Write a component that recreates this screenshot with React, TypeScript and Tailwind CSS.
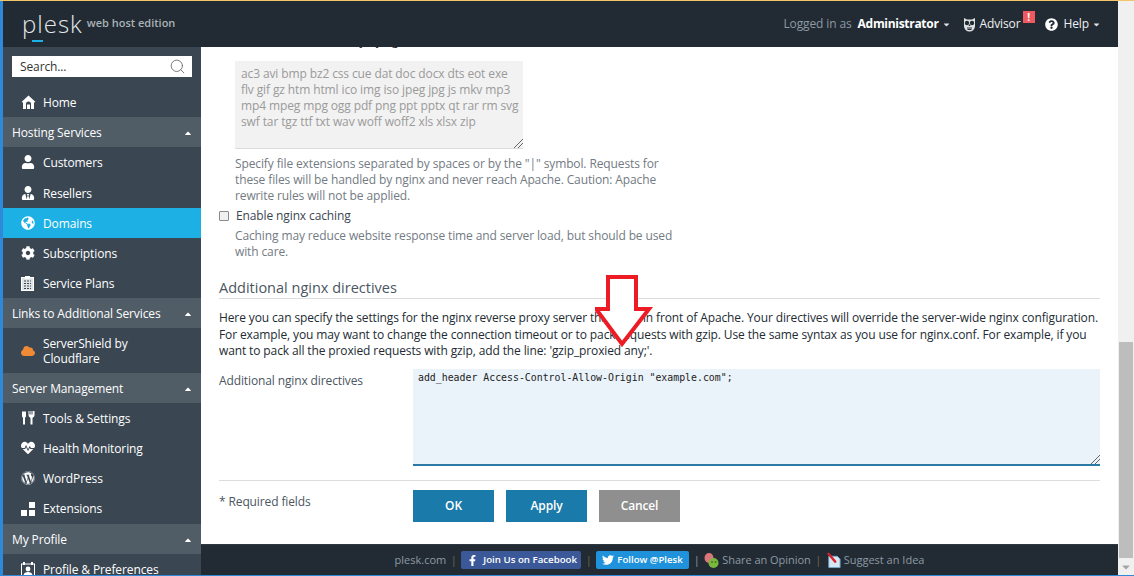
import React from "react";
import { Search } from "lucide-react";
import { FaUser, FaUserTie, FaGlobeAmericas, FaCog, FaHeartbeat, FaWordpress, FaFacebookF, FaTwitter, FaQuestionCircle, FaCloud, FaCaretDown, FaCaretUp } from "react-icons/fa";

const HomeIcon = () => (
  <svg width="15" height="15" viewBox="0 0 15 15" fill="#fff"><path d="M7.5 0.5 L14.5 7 L13 7.5 V14 H10 V9 a2.5 2.5 0 0 0-5 0 V14 H2 V7.5 L.5 7 Z"/><rect x="6" y="9.5" width="3" height="4.5"/></svg>
);
const PlansIcon = () => (
  <svg width="13" height="15" viewBox="0 0 13 15"><rect x=".5" y="1.5" width="12" height="13" fill="#dfe3e6" stroke="#fff"/><rect x="4" y="0" width="5" height="3" fill="#fff"/><path d="M3 5h7M3 7.5h7M3 10h7M3 12.5h7" stroke="#3a4652" strokeDasharray="2 1"/></svg>
);
const ExtIcon = () => (
  <svg width="14" height="14" viewBox="0 0 14 14" fill="#fff"><rect x="0" y="8" width="6" height="6"/><rect x="8" y="8" width="6" height="6"/><rect x="8" y="0" width="6" height="6"/></svg>
);
const ProfileIcon = () => (
  <svg width="14" height="14" viewBox="0 0 14 14" fill="none"><rect x=".5" y="2" width="13" height="12" stroke="#fff"/><circle cx="7" cy="7" r="2.4" fill="#fff"/><path d="M2.5 14c0-3 2-4 4.500-4s4.500 1 4.500 4z" fill="#fff"/><rect x="2" y="0" width="2" height="3" fill="#fff"/><rect x="10" y="0" width="2" height="3" fill="#fff"/></svg>
);
const ToolsIcon = () => (
  <svg width="14" height="14" viewBox="0 0 14 14" fill="#fff"><path d="M1 0.500 h4 V5 a2 2 0 0 1-1 1.700 L4 13.500 H2 L2 6.700 A2 2 0 0 1 1 5 Z"/><path d="M7.500 0 L8.500 0 V3.500 H9.500 V0 H10.500 V3.500 H11.500 V0 H12.500 L13.500 0 V4 C13.500 6 12 6.500 11.500 6.800 V13.500 H9.500 V6.800 C9 6.500 7.500 6 7.500 4 Z"/></svg>
);
const OwlIcon = () => (
  <svg width="13" height="15" viewBox="0 0 13 15"><path d="M1 1 L4 2.500 H9 L12 1 V9 a5.500 5.500 0 0 1-11 0 Z" fill="#dfe2e4"/><circle cx="4" cy="6" r="2.200" fill="#222b33"/><circle cx="9" cy="6" r="2.200" fill="#222b33"/><path d="M6.500 7 L7.500 9 H5.500 Z" fill="#222b33"/><path d="M4 11h5M4.500 12.500h4" stroke="#222b33"/></svg>
);
const ChatIcon = () => (
  <svg width="15" height="17" viewBox="0 0 15 17"><ellipse cx="5" cy="6" rx="4.500" ry="5" fill="#d9787c"/><circle cx="9.500" cy="11" r="5" fill="#7ab93d"/><circle cx="8" cy="10" r="1" fill="#3f7a1c"/><circle cx="11.500" cy="10" r="1" fill="#3f7a1c"/></svg>
);
const IdeaIcon = () => (
  <svg width="15" height="17" viewBox="0 0 16 17"><path d="M3 4 H12 L15 7 V16 H3 Z" fill="#d7e8f4" stroke="#7aa8c8"/><path d="M1 1 L3 0 L11 9 L11 11 L9 11 Z" fill="#d8232a"/></svg>
);
const Grip = () => (
  <svg className="absolute bottom-0 right-0" width="9" height="9" viewBox="0 0 9 9" stroke="#666"><path d="M0 9L9 0M4 9L9 4" /></svg>
);

const Item = ({ icon, children, active, className = "h-[30px]" }: { icon: React.ReactNode; children: React.ReactNode; active?: boolean; className?: string }) => (
  <div className={`flex shrink-0 items-center pl-[18px] text-[12px] leading-[15px] text-white ${active ? "bg-[#1cb0e4]" : ""} ${className}`}>
    <span className="flex w-[22px] shrink-0 justify-start">{icon}</span>
    <span>{children}</span>
  </div>
);
const Group = ({ children }: { children: React.ReactNode }) => (
  <div className="flex h-[30px] shrink-0 items-center justify-between bg-[#505c66] pl-[9px] pr-[8px] pt-[2px] text-[12px] text-white">
    <span>{children}</span>
    <FaCaretUp size={10} className="text-white" />
  </div>
);

export default function App() {
  return (
    <div className="flex h-[576px] w-[1134px] flex-col overflow-hidden bg-white font-['Open_Sans',sans-serif] text-[12px] tracking-[-0.12px] text-[#3a4652]">
      <div className="h-px shrink-0 bg-[#f3c56b]" />
      <div className="flex min-h-0 flex-1 border-b border-[#2e8ad8]">
        <div className="w-[3px] shrink-0 bg-[#2e8ad8]" />
        <div className="flex min-w-0 flex-1 flex-col">
          <div className="flex min-h-0 flex-1">
            <div className="flex min-w-0 flex-1 flex-col">
              <header className="z-10 flex h-[46px] shrink-0 items-center justify-between bg-[#222b33]">
                <div className="flex items-center pl-[19px]">
                  <span className="relative text-[24px] leading-[30px] font-light tracking-[1px] text-[#e6e9eb]">
                    plesk
                    <span className="absolute left-[10px] top-[31px] h-[2px] w-[11px] bg-[#1cb0e4]" />
                  </span>
                  <span className="mb-[2px] ml-[4px] text-[11px] font-semibold tracking-normal text-[#a9b2b8]">web host edition</span>
                </div>
                <div className="flex items-center pr-[17px] text-[12px]">
                  <span className="text-[#8d9aa5]">Logged in as</span>
                  <span className="ml-[6px] font-bold tracking-[-0.3px] text-white">Administrator</span>
                  <FaCaretDown size={9} className="ml-[3px] text-[#dfe2e4]" />
                  <span className="ml-[12px]"><OwlIcon /></span>
                  <span className="relative ml-[4px] mr-[16px] text-[#eef0f2]">
                    Advisor
                    <span className="absolute -right-[14px] -top-[4px] flex h-[12px] w-[12px] items-center justify-center bg-[#ee5a5f] text-[10px] font-bold leading-none text-white">!</span>
                  </span>
                  <FaQuestionCircle size={13} className="ml-[8px] text-white" />
                  <span className="ml-[6px] text-[#eef0f2]">Help</span>
                  <FaCaretDown size={9} className="ml-[3px] text-[#dfe2e4]" />
                </div>
              </header>
              <div className="flex min-h-0 flex-1">
                <aside className="flex w-[198px] shrink-0 flex-col overflow-hidden bg-[#3a4652]">
                  <div className="h-[40px] shrink-0 px-[9px] pt-[9px]">
                    <div className="flex h-[21px] w-[180px] items-center justify-between bg-white pl-[8px] pr-[6px] text-[#333]">
                      <span className="pt-[1px]">Search...</span>
                      <Search size={17} strokeWidth={1.200} className="text-[#666]" />
                    </div>
                  </div>
                  <Item icon={<HomeIcon />}>Home</Item>
                  <Group>Hosting Services</Group>
                  <Item icon={<FaUser size={14} />}>Customers</Item>
                  <Item icon={<FaUserTie size={14} />} className="h-[31px] pt-[1px]">Resellers</Item>
                  <Item icon={<FaGlobeAmericas size={14} />} active>Domains</Item>
                  <Item icon={<FaCog size={14} />}>Subscriptions</Item>
                  <Item icon={<PlansIcon />}>Service Plans</Item>
                  <Group>Links to Additional Services</Group>
                  <Item icon={<FaCloud size={14} className="text-[#f08a34]" />} className="h-[45px]">ServerShield by<br />Cloudflare</Item>
                  <Group>Server Management</Group>
                  <Item icon={<ToolsIcon />}>Tools &amp; Settings</Item>
                  <Item icon={<FaHeartbeat size={14} />}>Health Monitoring</Item>
                  <Item icon={<FaWordpress size={14} />}>WordPress</Item>
                  <Item icon={<ExtIcon />} className="h-[31px]">Extensions</Item>
                  <Group>My Profile</Group>
                  <Item icon={<ProfileIcon />}>Profile &amp; Preferences</Item>
                </aside>
                <main className="relative flex min-w-0 flex-1 flex-col">
                  <div className="min-h-0 flex-1 overflow-hidden pl-[18px] pr-[18px]">
                    <div className="-mt-[15px] pl-[16px] leading-[18px]">
                      <div className="h-[29px] text-[#222]">Serve static files directly by nginx</div>
                      <div className="relative h-[88px] w-[288px] border-b border-[#ddd] bg-[#f2f2f2] pl-[6px] pt-[5px] leading-[16px] text-[#9a9a9a]">
                        <div className="whitespace-nowrap">ac3 avi bmp bz2 css cue dat doc docx dts eot exe</div>
                        <div className="whitespace-nowrap">flv gif gz htm html ico img iso jpeg jpg js mkv mp3</div>
                        <div className="whitespace-nowrap">mp4 mpeg mpg ogg pdf png ppt pptx qt rar rm svg</div>
                        <div className="whitespace-nowrap">swf tar tgz ttf txt wav woff woff2 xls xlsx zip</div>
                        <Grip />
                      </div>
                      <p className="mt-[7px] w-[440px] leading-[16px] text-[#737b83]">
                        Specify file extensions separated by spaces or by the "|" symbol. Requests for these files will be handled by nginx and never reach Apache. Caution: Apache rewrite rules will not be applied.
                      </p>
                    </div>
                    <label className="mt-[3px] flex h-[18px] items-center text-[#3a4652]">
                      <span className="mr-[7px] h-[10px] w-[10px] rounded-[1px] border border-[#8a8a8a] bg-[#f0f0f0]" />
                      Enable nginx caching
                    </label>
                    <p className="mt-[3px] w-[465px] pl-[16px] leading-[16px] text-[#737b83]">
                      Caching may reduce website response time and server load, but should be used with care.
                    </p>
                    <h3 className="mt-[17px] h-[22px] border-b border-[#ddd] text-[14.500px] leading-[22px] tracking-normal text-[#4b565f]">Additional nginx directives</h3>
                    <p className="mt-[11px] h-[49px] leading-[16.500px] text-[#222b33]">
                      Here you can specify the settings for the nginx reverse proxy server that runs in front of Apache. Your directives will override the server-wide nginx configuration. For example, you may want to change the connection timeout or to pack requests with gzip. Use the same syntax as you use for nginx.conf. For example, if you want to pack all the proxied requests with gzip, add the line: 'gzip_proxied any;'.
                    </p>
                    <div className="mt-[10px] flex">
                      <div className="w-[194px] pt-[3px] text-[#4b565f]">Additional nginx directives</div>
                      <div className="relative h-[97px] flex-1 border-b-2 border-[#2b7aa3] bg-[#ebf3fa] pl-[5px] pt-[2px] font-['DejaVu_Sans_Mono',monospace] text-[9.870px] leading-[14px] tracking-normal text-[#222]">
                        add_header Access-Control-Allow-Origin "example.com";
                        <Grip />
                      </div>
                    </div>
                    <div className="mt-[14px] flex border-t border-[#ddd] pt-[9px]">
                      <div className="w-[194px] pt-[3px] text-[#4b565f]">* Required fields</div>
                      <div className="flex gap-[12px] font-semibold text-white">
                        <div className="flex h-[32px] w-[81px] items-center justify-center bg-[#1a7aa9]">OK</div>
                        <div className="flex h-[32px] w-[81px] items-center justify-center bg-[#1a7aa9]">Apply</div>
                        <div className="flex h-[32px] w-[81px] items-center justify-center bg-[#8f8f8f]">Cancel</div>
                      </div>
                    </div>
                  </div>
                  <footer className="flex h-[31px] shrink-0 items-center justify-center gap-[4.500px] whitespace-nowrap border-t border-[#2d3840] bg-[#222b33] text-[11px] tracking-normal text-[#8d9aa5]">
                    <span>plesk.com</span>
                    <span className="text-[#76654a]">|</span>
                    <span className="flex h-[18px] w-[120px] items-center rounded-[2px] bg-[#3b5998] pl-[6px] text-[9.700px] font-semibold text-white"><FaFacebookF size={11} className="mr-[5px]" />Join Us on Facebook</span>
                    <span className="text-[#76654a]">|</span>
                    <span className="flex h-[18px] w-[93px] items-center rounded-[2px] bg-[#2092dc] pl-[6px] text-[9.600px] font-semibold text-white"><FaTwitter size={12} className="mr-[3px]" />Follow @Plesk</span>
                    <span className="text-[#8d9aa5]">|</span>
                    <span className="flex items-center gap-[3px] tracking-[-0.05px]"><ChatIcon />Share an Opinion</span>
                    <span className="text-[#76654a]">|</span>
                    <span className="flex items-center gap-[3px]"><IdeaIcon />Suggest an Idea</span>
                  </footer>
                  <svg className="absolute left-[394px] top-[228px]" width="60" height="74" viewBox="596 275 60 74">
                    <path d="M609 277 H637 V309 H650 L623 344 L597 309 H609 Z" fill="#fff" stroke="#ed1c24" strokeWidth="4" />
                  </svg>
                </main>
              </div>
            </div>
            <div className="flex w-[16px] shrink-0 flex-col items-center bg-[#f0f0f0]">
              <div className="flex-1" />
              <div className="h-[216px] w-[14px] bg-[#bdbdbd]" />
              <div className="flex h-[17px] items-center justify-center">
                <FaCaretDown size={12} className="text-[#a6a6a6]" />
              </div>
            </div>
          </div>
        </div>
      </div>
    </div>
  );
}
